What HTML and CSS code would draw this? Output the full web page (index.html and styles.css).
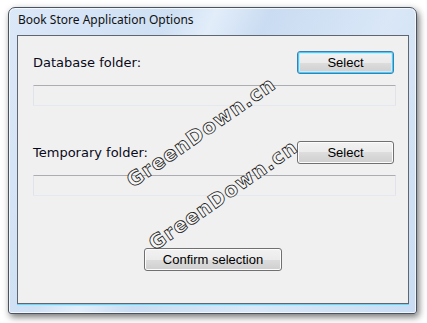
FILE: index.html
```html
<!DOCTYPE html>
<html lang="en">
<head>
    <meta charset="UTF-8">
    <title>Book Store Application Options</title>
    <link rel="stylesheet" href="styles.css">
</head>
<body>
<div class="window">
    <div class="titlebar">Book Store Application Options</div>

    <div class="client">
        <div class="row">
            <span class="label">Database folder:</span>
            <button class="btn default">Select</button>
        </div>
        <div class="field"></div>

        <div class="row second">
            <span class="label">Temporary folder:</span>
            <button class="btn">Select</button>
        </div>
        <div class="field"></div>

        <div class="bottom">
            <button class="btn wide">Confirm selection</button>
        </div>
    </div>
</div>

<!-- watermark over the dialog -->
<div class="mark one">GreenDown.cn</div>
<div class="mark two">GreenDown.cn</div>
</body>
</html>
```

FILE: styles.css
```css
body {
    margin: 0;
    background: #fff;
    width: 427px;
    height: 323px;
    overflow: hidden;
}

.window {
    margin: 7px 0 0 8px;
    width: 407px;
    height: 305px;
    border: 1px solid #4a5360;
    border-radius: 7px 7px 3px 3px;
    background: linear-gradient(115deg, #dbe8f8 0%, #cfe0f4 30%, #e2edf9 38%, #cadcf2 48%, #d9e7f7 70%, #c9dcf3 100%);
    box-shadow: 2px 3px 7px rgba(0,0,0,0.55), inset 0 0 0 1px rgba(255,255,255,0.7);
    display: flex;
    flex-direction: column;
}

.titlebar {
    height: 27px;
    line-height: 24px;
    padding-left: 9px;
    font-family: "Noto Sans", "DejaVu Sans", sans-serif;
    font-size: 12px;
    color: #111;
}

.client {
    margin: 0 7px 0 8px;
    height: 269px;
    border: 1px solid #5f6670;
    background: #f0f0f0;
    padding: 15px 12px 0 15px;
    box-sizing: border-box;
    box-shadow: 0 1px 0 #6fd3f7, 0 2px 0 #bfe3f8;
}

.row {
    display: flex;
    justify-content: space-between;
    align-items: center;
    height: 23px;
}

.row.second {
    margin-top: 35px;
}

.label {
    font-family: "DejaVu Sans", Verdana, sans-serif;
    font-size: 13px;
    color: #0a0a1a;
}

.btn {
    width: 97px;
    height: 23px;
    margin-right: 2px;
    padding: 0;
    border: 1px solid #707070;
    border-radius: 3px;
    background: linear-gradient(#f2f2f2 0%, #ebebeb 50%, #dddddd 50%, #cfcfcf 100%);
    box-shadow: inset 0 0 0 1px #fcfcfc;
    font-family: "Liberation Sans", Arial, sans-serif;
    font-size: 13px;
    color: #000;
}

.btn.default {
    border-color: #3c7fb1;
    box-shadow: inset 0 0 0 1px #48cdf6, inset 0 0 0 2px #c8ecfb;
}

.btn.wide {
    width: 138px;
    margin: 0;
}

.field {
    margin-top: 11px;
    height: 21px;
    box-sizing: border-box;
    border: 1px solid #e2e3ea;
    border-top-color: #abadb3;
    border-bottom-color: #e3e9ef;
    border-radius: 1px;
    background: #f0f0f0;
}

.bottom {
    margin-top: 52px;
    display: flex;
    justify-content: center;
    padding-right: 3px;
}

/* watermark */
.mark {
    position: absolute;
    width: 200px;
    height: 24px;
    line-height: 24px;
    text-align: center;
    font-family: "DejaVu Sans", sans-serif;
    font-weight: bold;
    font-size: 20px;
    letter-spacing: 1px;
    color: #f6f6f6;
    -webkit-text-stroke: 0.8px #1a1a1a;
    transform: rotate(-35deg);
    pointer-events: none;
}

.mark.one {
    left: 101px;
    top: 120px;
}

.mark.two {
    left: 123px;
    top: 183px;
}
```
